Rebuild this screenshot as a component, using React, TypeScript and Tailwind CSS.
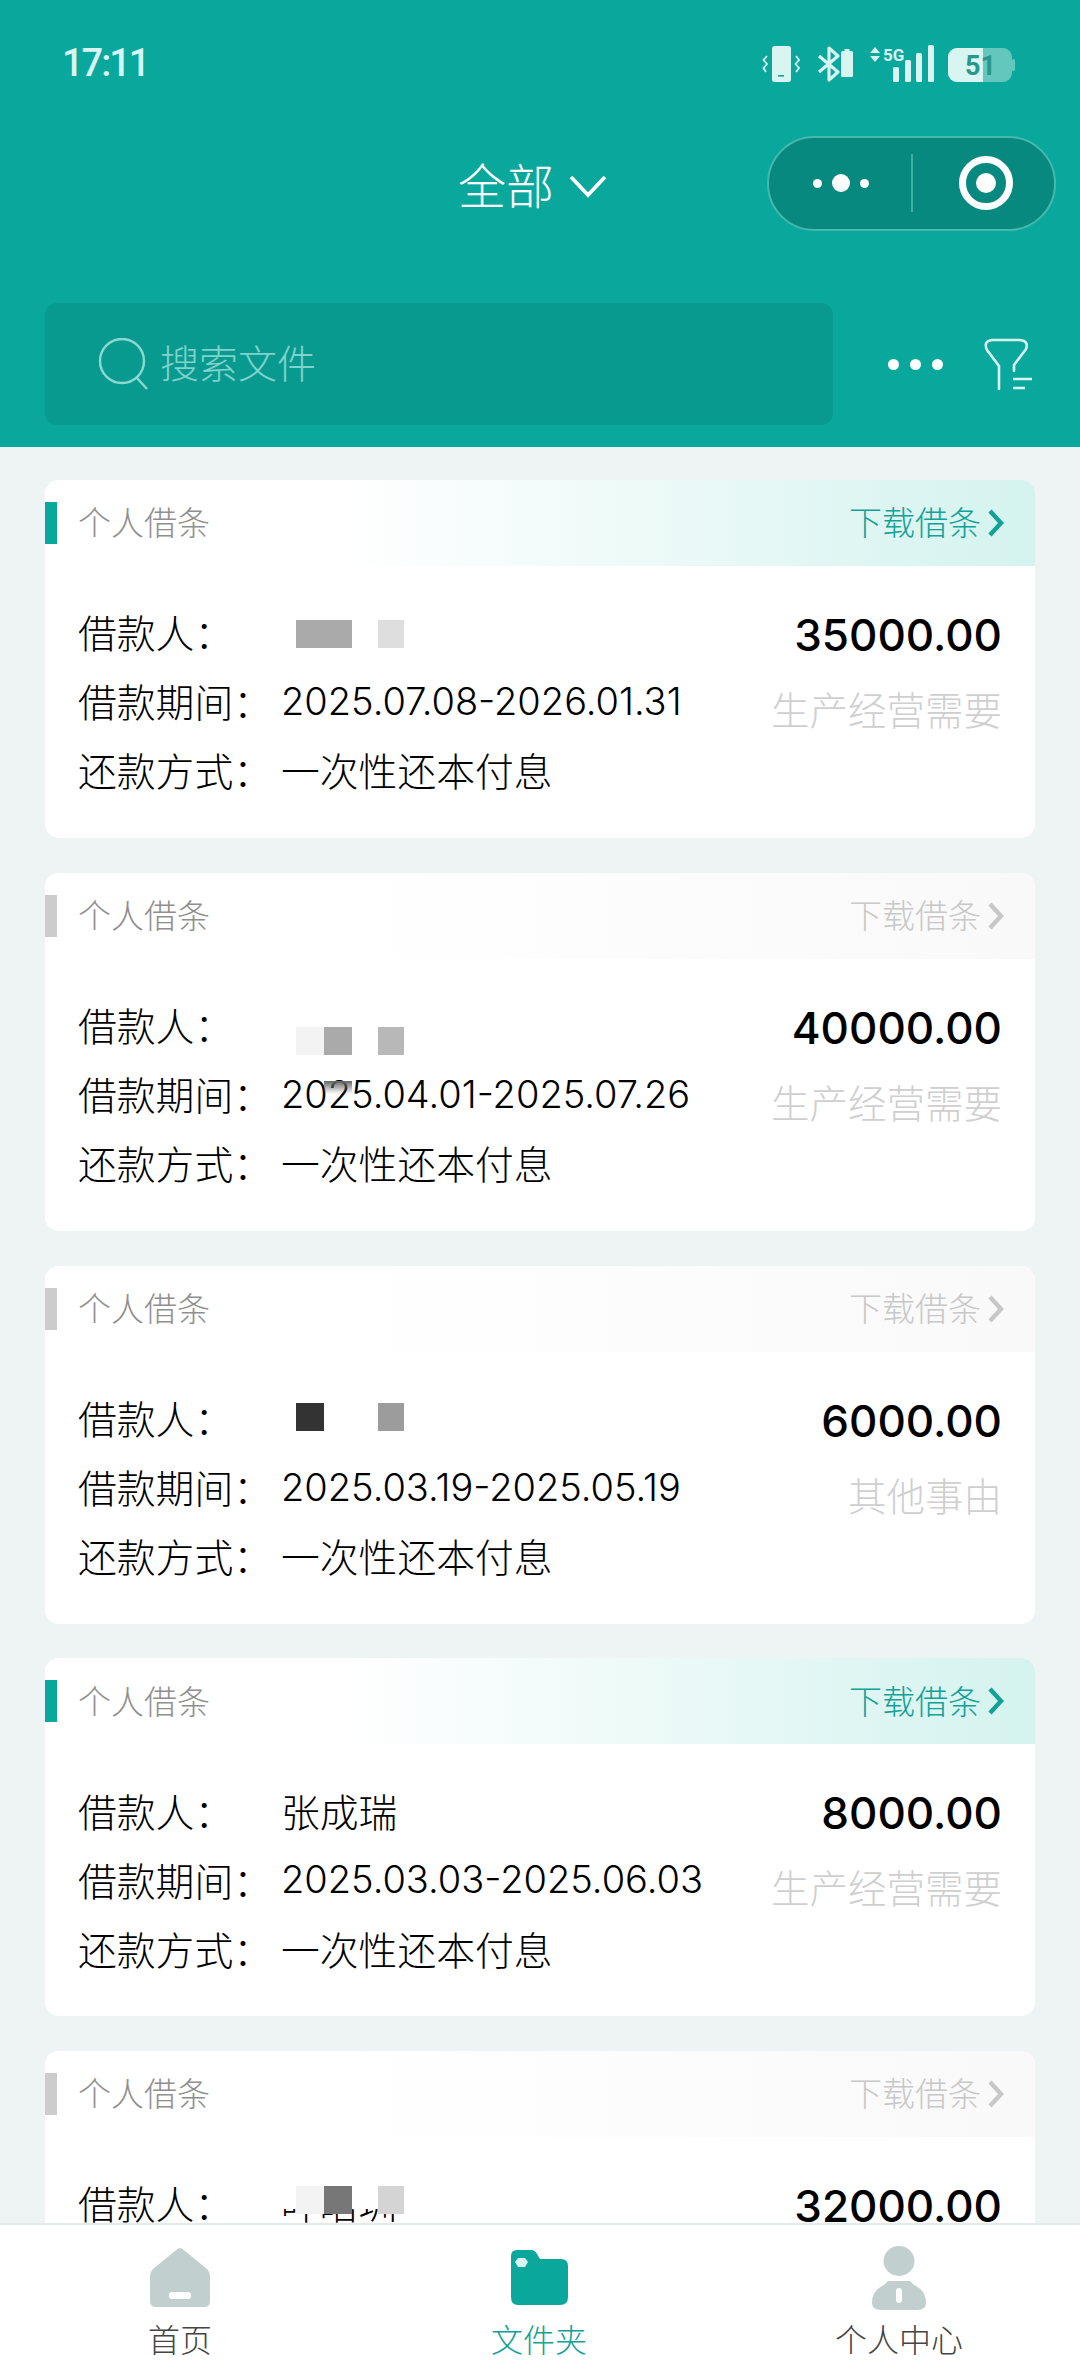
const cjk = { fontFamily: '"Noto Sans CJK SC", "Noto Sans", sans-serif' }
const latin = { fontFamily: 'Inter, "Noto Sans CJK SC", sans-serif' }

type LoanItem = {
  amount: string
  period: string
  purpose: string
  active: boolean
  name?: string
  masks?: string[]
}

const loans: LoanItem[] = [
  {
    amount: "35000.00",
    period: "2025.07.08-2026.01.31",
    purpose: "生产经营需要",
    active: true,
    masks: [
      "left-[15px] top-[21px] h-[28px] w-[56px] bg-[#aaaaaa]",
      "left-[97px] top-[21px] h-[28px] w-[26px] bg-[#dedede]",
    ],
  },
  {
    amount: "40000.00",
    period: "2025.04.01-2025.07.26",
    purpose: "生产经营需要",
    active: false,
    masks: [
      "left-[15px] top-[35px] h-[28px] w-[28px] bg-[#f3f3f3]",
      "left-[43px] top-[35px] h-[28px] w-[28px] bg-[#aaaaaa]",
      "left-[97px] top-[35px] h-[28px] w-[26px] bg-[#b8b8b8]",
      "left-[43px] top-[89px] h-[13px] w-[28px] bg-gradient-to-b from-[#666666] to-transparent",
    ],
  },
  {
    amount: "6000.00",
    period: "2025.03.19-2025.05.19",
    purpose: "其他事由",
    active: false,
    masks: [
      "left-[15px] top-[18px] h-[28px] w-[28px] bg-[#333333]",
      "left-[97px] top-[18px] h-[28px] w-[26px] bg-[#9c9c9c]",
    ],
  },
  {
    amount: "8000.00",
    period: "2025.03.03-2025.06.03",
    purpose: "生产经营需要",
    active: true,
    name: "张成瑞",
  },
  {
    amount: "32000.00",
    period: "2025.02.11-2025.08.11",
    purpose: "生产经营需要",
    active: false,
    name: "叶晤圳",
    masks: [
      "left-[-6px] top-[0px] h-[39px] w-[134px] bg-white",
      "left-[15px] top-[16px] h-[28px] w-[28px] bg-[#f3f3f3]",
      "left-[43px] top-[16px] h-[28px] w-[28px] bg-[#777777]",
      "left-[97px] top-[16px] h-[28px] w-[26px] bg-[#d4d4d4]",
    ],
  },
]

function VibrateIcon() {
  return (
    <svg width="38" height="36" viewBox="0 0 38 36" className="absolute left-[22px] top-[46px]" fill="none">
      <rect x="10" y="0" width="19" height="36" rx="2.5" fill="#d8f5f1" />
      <rect x="16" y="29" width="6" height="1.6" fill="#0aa89c" />
      <path d="M5 10 L1.5 14 L5 18 L1.5 22 L4 26" stroke="#d8f5f1" strokeWidth="1.8" />
      <path d="M34 10 L37 14 L33.5 18 L37 22 L34 26" stroke="#d8f5f1" strokeWidth="1.8" />
    </svg>
  )
}

function BluetoothIcon() {
  return (
    <svg width="38" height="36" viewBox="0 0 38 36" className="absolute left-[76px] top-[46px]" fill="none">
      <path d="M3 10 L22 26 L13 34 V2 L22 10 L3 26" stroke="#d8f5f1" strokeWidth="3.2" strokeLinejoin="round" />
      <rect x="25" y="5" width="12" height="26" rx="1.5" fill="#d8f5f1" />
      <rect x="28.5" y="3" width="5" height="3" fill="#d8f5f1" />
    </svg>
  )
}

function SignalIcon() {
  return (
    <svg width="66" height="38" viewBox="0 0 66 38" className="absolute left-[129px] top-[45px]">
      <path d="M1 8 L6 2 L11 8 Z M1 11 H11 L6 17 Z" fill="#d8f5f1" />
      <text x="14" y="16" fontSize="17" fontWeight="700" fill="#d8f5f1" fontFamily="Roboto, sans-serif">
        5G
      </text>
      <rect x="24" y="22" width="6" height="15" rx="1.5" fill="#d8f5f1" />
      <rect x="36" y="15" width="6" height="22" rx="1.5" fill="#d8f5f1" />
      <rect x="47" y="8" width="6" height="29" rx="1.5" fill="#d8f5f1" />
      <rect x="59" y="0" width="6" height="37" rx="1.5" fill="#d8f5f1" />
    </svg>
  )
}

function BatteryIcon() {
  return (
    <svg width="68" height="36" viewBox="0 0 68 36" className="absolute left-[208px] top-[47px]">
      <rect x="0" y="1" width="64" height="34" rx="9" fill="#63c7bd" />
      <path d="M9 1 H35 V35 H9 A9 9 0 0 1 0 26 V10 A9 9 0 0 1 9 1 Z" fill="#d8f5f1" />
      <rect x="64" y="12" width="3" height="12" rx="1.5" fill="#63c7bd" />
      <text x="17" y="28" fontSize="27" fontWeight="700" fill="#2a978d" fontFamily="Roboto, sans-serif">
        51
      </text>
    </svg>
  )
}

function StatusBar() {
  return (
    <div className="flex h-[130px] pl-[62px] pt-[41px] text-[#d8f5f1]">
      <span className="text-[38px] leading-[44px] font-medium tracking-[-2px]" style={{ fontFamily: "Roboto, sans-serif" }}>
        17:11
      </span>
      <div className="relative ml-auto -mt-[41px] h-[100px] w-[340px]">
        <VibrateIcon />
        <BluetoothIcon />
        <SignalIcon />
        <BatteryIcon />
      </div>
    </div>
  )
}

function Capsule() {
  return (
    <div className="ml-auto mr-[24px] flex h-[95px] w-[289px] items-center rounded-full border-2 border-[#46b8ae] bg-[#08897f]">
      <div className="flex w-[142px] items-center justify-center gap-[10px] pl-[2px]">
        <span className="h-[9px] w-[9px] rounded-full bg-white" />
        <span className="h-[18px] w-[18px] rounded-full bg-white" />
        <span className="h-[9px] w-[9px] rounded-full bg-white" />
      </div>
      <div className="h-[58px] w-[1.5px] bg-[#3fb0a6]" />
      <div className="flex flex-1 items-center justify-center pl-[6px]">
        <div className="flex h-[54px] w-[54px] items-center justify-center rounded-full border-[7px] border-white">
          <span className="h-[20px] w-[20px] rounded-full bg-white" />
        </div>
      </div>
    </div>
  )
}

function TitleBar() {
  return (
    <div className="flex h-[106px] items-center pl-[458px]">
      <span className="text-[48px] font-light text-white" style={cjk}>
        全部
      </span>
      <svg width="38" height="24" viewBox="0 0 38 24" className="ml-[15px] mt-[6px]" fill="none">
        <path d="M2 3 L19 21 L36 3" stroke="white" strokeWidth="3.8" />
      </svg>
      <Capsule />
    </div>
  )
}

function SearchRow() {
  return (
    <div className="mt-[67px] flex items-center pl-[45px]">
      <div className="flex h-[122px] w-[788px] items-center rounded-[12px] bg-[#099a8f] pl-[53px]">
        <svg width="52" height="52" viewBox="0 0 52 52" fill="none">
          <circle cx="24" cy="23" r="22" stroke="#8ad8d1" strokeWidth="2.4" />
          <path d="M39 40 L49 51" stroke="#8ad8d1" strokeWidth="2.4" />
        </svg>
        <span className="mb-[6px] ml-[10px] text-[39px] font-light text-[#7fd3cc]" style={cjk}>
          搜索文件
        </span>
      </div>
      <div className="ml-[55px] flex gap-[11px]">
        <span className="h-[11px] w-[11px] rounded-full bg-white" />
        <span className="h-[11px] w-[11px] rounded-full bg-white" />
        <span className="h-[11px] w-[11px] rounded-full bg-white" />
      </div>
      <svg width="50" height="54" viewBox="0 0 50 54" className="ml-[40px]" fill="none">
        <path
          d="M16 52 V29 L4 13 Q0 4 9 3 H37 Q46 4 43 12 L31 28 V34"
          stroke="#d8f5f1"
          strokeWidth="2.6"
          strokeLinecap="round"
        />
        <path d="M30 42 H49 M30 51 H42" stroke="#d8f5f1" strokeWidth="2.6" />
      </svg>
    </div>
  )
}

function Row({ label, children }: { label: string; children: React.ReactNode }) {
  return (
    <div className="flex h-[69px] items-center text-[38.8px] font-light text-black">
      <span className="w-[203px] shrink-0 pb-[4px]" style={cjk}>
        {label}
      </span>
      {children}
    </div>
  )
}

function LoanCard({ item }: { item: LoanItem }) {
  return (
    <section className="h-[358px] shrink-0 overflow-hidden rounded-[14px] bg-white">
      <div
        className={
          item.active
            ? "flex h-[86px] items-center bg-gradient-to-r from-white from-[30%] to-[#d4f3ef]"
            : "flex h-[86px] items-center bg-gradient-to-r from-white from-[30%] to-[#f9f9f9]"
        }
      >
        <span className={item.active ? "h-[42px] w-[12px] bg-[#0aa89c]" : "h-[42px] w-[12px] bg-[#cccccc]"} />
        <span className="ml-[21px] pb-[2px] text-[33px] font-light text-[#8f8f8f]" style={cjk}>
          个人借条
        </span>
        <div
          className={
            item.active
              ? "ml-auto mr-[30px] flex items-center gap-[6px] text-[#12a196]"
              : "ml-auto mr-[30px] flex items-center gap-[6px] text-[#c8c8c8]"
          }
        >
          <span className="pb-[2px] text-[33px] font-light" style={cjk}>
            下载借条
          </span>
          <svg width="18" height="28" viewBox="0 0 18 28" fill="none">
            <path d="M3 2 L14 14 L3 26" stroke="currentColor" strokeWidth="4.4" />
          </svg>
        </div>
      </div>
      <div className="flex justify-between pl-[33px] pr-[33px] pt-[33px]">
        <div>
          <Row label="借款人：">
            <div className="relative h-[69px] flex-1">
              {item.name && (
                <span className="flex h-full items-center pb-[4px]" style={cjk}>
                  {item.name}
                </span>
              )}
              {item.masks?.map((mask, i) => (
                <span key={i} className={`absolute ${mask}`} />
              ))}
            </div>
          </Row>
          <Row label="借款期间：">
            <span className="pb-[2px] text-[38px]" style={latin}>
              {item.period}
            </span>
          </Row>
          <Row label="还款方式：">
            <span className="pb-[4px]" style={cjk}>
              一次性还本付息
            </span>
          </Row>
        </div>
        <div className="text-right">
          <div className="flex h-[69px] items-center justify-end pt-[3px] text-[44px] font-medium text-black" style={latin}>
            {item.amount}
          </div>
          <div className="mt-[6px] text-[38.5px] leading-[69px] font-light text-[#cfcfcf]" style={cjk}>
            {item.purpose}
          </div>
        </div>
      </div>
    </section>
  )
}

function HomeIcon() {
  return (
    <svg width="62" height="60" viewBox="0 0 62 60" fill="none">
      <path
        d="M31 0 Q33 0 36 3 L58 21 Q61 24 61 28 V53 Q61 59 55 59 H7 Q1 59 1 53 V28 Q1 24 4 21 L26 3 Q29 0 31 0 Z"
        fill="#c2cfcf"
      />
      <rect x="20" y="44" width="22" height="7" rx="3" fill="white" />
    </svg>
  )
}

function FolderIcon() {
  return (
    <svg width="60" height="58" viewBox="0 0 60 58" fill="none">
      <path
        d="M8 1 H22 Q26 1 28 5 L31 10 H52 Q59 10 59 17 V48 Q59 56 51 56 H9 Q2 56 2 48 V7 Q2 1 8 1 Z"
        fill="#0aa89c"
      />
      <path d="M9 9 H16 L19 13 L16 18 H9 L6 13 Z" fill="#d8f5f1" />
    </svg>
  )
}

function PersonIcon() {
  return (
    <svg width="56" height="64" viewBox="0 0 56 64" fill="none">
      <ellipse cx="28" cy="15" rx="15.5" ry="15" fill="#c2cfcf" />
      <path d="M17 35 H39 L43 39 Q55 44 55 57 Q55 64 46 64 H10 Q1 64 1 57 Q1 44 13 39 Z" fill="#c2cfcf" />
      <rect x="25" y="42" width="6" height="15" rx="3" fill="white" />
    </svg>
  )
}

function TabBar() {
  return (
    <nav className="grid h-[153px] shrink-0 grid-cols-[360px_358px_362px] border-t-2 border-[#e4eaea] bg-white" style={cjk}>
      <div className="flex flex-col items-center pt-[21px]">
        <div className="flex h-[64px] items-center">
          <HomeIcon />
        </div>
        <span className="mt-[5px] text-[32px] leading-[46px] font-light text-[#444]">首页</span>
      </div>
      <div className="flex flex-col items-center pt-[21px]">
        <div className="flex h-[64px] items-center">
          <FolderIcon />
        </div>
        <span className="mt-[5px] text-[32px] leading-[46px] font-light text-[#12a196]">文件夹</span>
      </div>
      <div className="flex flex-col items-center pt-[21px]">
        <div className="flex h-[64px] items-center">
          <PersonIcon />
        </div>
        <span className="mt-[5px] text-[32px] leading-[46px] font-light text-[#444]">个人中心</span>
      </div>
    </nav>
  )
}

export default function App() {
  return (
    <div className="flex h-[2376px] w-[1080px] flex-col overflow-hidden bg-[#eef3f3]">
      <header className="h-[447px] shrink-0 bg-[#0aa89c]">
        <StatusBar />
        <TitleBar />
        <SearchRow />
      </header>
      <main className="flex min-h-0 flex-1 flex-col gap-[34.75px] overflow-hidden px-[45px] pt-[33px]">
        {loans.map((item, i) => (
          <LoanCard key={i} item={item} />
        ))}
      </main>
      <TabBar />
    </div>
  )
}
